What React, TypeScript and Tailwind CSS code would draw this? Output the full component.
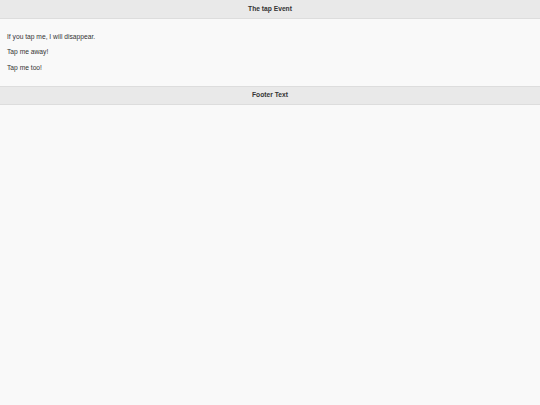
export default function App() {
  return (
    <div className="min-h-[405px] bg-[#f9f9f9] font-['Liberation_Sans',Arial,sans-serif] text-[#333]">
      <header className="flex h-[19px] items-center justify-center border-b border-[#dddddd] bg-[#e9e9e9]">
        <h1 className="text-[6.7px] font-bold text-[#333]">The tap Event</h1>
      </header>
      <main className="flex flex-col gap-[6.5px] px-[7px] pb-[14px] pt-[12.5px] text-[6.7px] leading-[9px]">
        <p>If you tap me, I will disappear.</p>
        <p>Tap me away!</p>
        <p>Tap me too!</p>
      </main>
      <footer className="flex h-[19px] items-center justify-center border-y border-[#dddddd] bg-[#e9e9e9]">
        <h4 className="text-[6.7px] font-bold text-[#333]">Footer Text</h4>
      </footer>
    </div>
  );
}
